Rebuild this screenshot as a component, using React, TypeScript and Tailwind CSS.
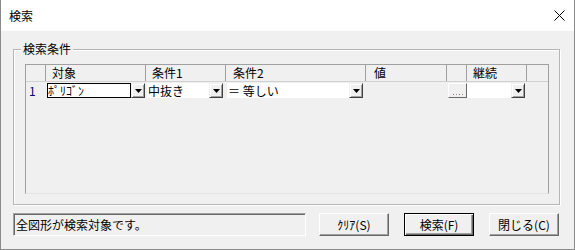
import React from "react";

const Arrow = () => (
  <div className="w-[14px] h-[15px] box-border bg-[#f0f0f0] border border-t-[#f0f0f0] border-l-[#f0f0f0] border-r-[#404040] border-b-[#404040] shadow-[inset_1px_1px_0_#ffffff,inset_-1px_-1px_0_#a0a0a0] flex items-center justify-center shrink-0">
    <svg width="7" height="4" viewBox="0 0 7 4">
      <path d="M0 0h7L3.5 4z" fill="#000" />
    </svg>
  </div>
);

const Combo = ({ text, w, focus }: { text: string; w: number; focus?: boolean }) => (
  <div className="flex items-center h-full">
    <div
      className={
        "h-[15px] bg-white box-border flex items-center leading-[13px] " +
        (focus ? "border border-black" : "pl-[1px]")
      }
      style={{ width: w }}
    >
      {text}
    </div>
    <Arrow />
  </div>
);

const Btn = ({ label, def }: { label: string; def?: boolean }) => (
  <div
    className={
      "w-[70px] h-[23px] box-border flex items-center justify-center bg-[#f0f0f0] " +
      (def
        ? "border border-black shadow-[inset_1px_1px_0_#ffffff,inset_-1px_-1px_0_#696969,inset_-2px_-2px_0_#a0a0a0]"
        : "border border-t-white border-l-white border-r-[#696969] border-b-[#696969] shadow-[inset_-1px_-1px_0_#a0a0a0]")
    }
  >
    {label}
  </div>
);

export default function App() {
  const cols = "grid grid-cols-[20px_100px_80px_140px_81px_20px_60px_21px]";
  const head = "border-r border-[#a0a0a0] pl-[6px] leading-[16px]";
  return (
    <div className="w-[575px] h-[250px] flex flex-col bg-[#f0f0f0] text-[12px] text-black font-['Noto_Sans_CJK_JP',sans-serif] border-x border-b border-[#8a8a8a] box-border overflow-hidden">
      {/* title bar */}
      <div className="h-[31px] bg-white flex items-center justify-between pl-[8px] pr-[9px] shrink-0">
        <span className="leading-[14px]">検索</span>
        <svg width="11" height="11" viewBox="0 0 11 11">
          <path d="M0.5 0.5L10.5 10.5M10.5 0.5L0.5 10.5" stroke="#000" strokeWidth="1" />
        </svg>
      </div>

      <div className="flex flex-col pl-[12px]">
        {/* group box */}
        <div className="relative mt-[18px] w-[547px] h-[156px] box-border border border-[#b5b5b5] shadow-[inset_1px_1px_0_#ffffff,1px_1px_0_#ffffff] pt-[14px] pl-[11px]">
          <span className="absolute left-[7px] -top-[9px] px-[2px] bg-[#f0f0f0] leading-[16px]">検索条件</span>

          {/* grid */}
          <div className="w-[524px] h-[130px] box-border border border-[#a0a0a0] border-b-[#e3e3e3] border-r-[#a0a0a0] bg-[#f0f0f0] flex flex-col">
            <div className={cols + " h-[17px] border-b border-[#d0d0d0]"}>
              <div className={head} />
              <div className={head}>対象</div>
              <div className={head}>条件1</div>
              <div className={head + " pl-[7px]"}>条件2</div>
              <div className={head + " pl-[8px]"}>値</div>
              <div className={head} />
              <div className={head}>継続</div>
              <div />
            </div>
            <div className={cols + " h-[17px] items-center"}>
              <div className="pl-[3px] text-[#000080] leading-[15px]">1</div>
              <div className="pl-[1px] h-full">
                <Combo text="ﾎﾟﾘｺﾞﾝ" w={84} focus />
              </div>
              <div className="pl-[1px] h-full">
                <Combo text="中抜き" w={62} />
              </div>
              <div className="pl-[1px] h-full">
                <Combo text="＝ 等しい" w={122} />
              </div>
              <div />
              <div className="pl-[1px] h-full flex items-center">
                <div className="w-[19px] h-[15px] box-border bg-[#f0f0f0] border border-t-white border-l-white border-r-[#696969] border-b-[#696969] flex items-end justify-center pb-[2px]">
                  <div className="flex gap-[2px]">
                    <span className="w-[1px] h-[1px] bg-[#6a7fb0]" />
                    <span className="w-[1px] h-[1px] bg-[#b08a5a]" />
                    <span className="w-[1px] h-[1px] bg-[#6a7fb0]" />
                    <span className="w-[1px] h-[1px] bg-[#b08a5a]" />
                  </div>
                </div>
              </div>
              <div className="h-full">
                <Combo text="" w={44} />
              </div>
              <div />
            </div>
          </div>
        </div>

        {/* bottom row */}
        <div className="flex items-center mt-[8px]">
          <div className="w-[293px] h-[23px] box-border border border-t-[#a0a0a0] border-l-[#a0a0a0] border-r-white border-b-white shadow-[inset_1px_1px_0_#696969] flex items-center pl-[2px] leading-[14px]">
            全図形が検索対象です。
          </div>
          <div className="flex gap-[15px] ml-[13px]">
            <Btn label="ｸﾘｱ(S)" />
            <Btn label="検索(F)" def />
            <Btn label="閉じる(C)" />
          </div>
        </div>
      </div>
    </div>
  );
}
